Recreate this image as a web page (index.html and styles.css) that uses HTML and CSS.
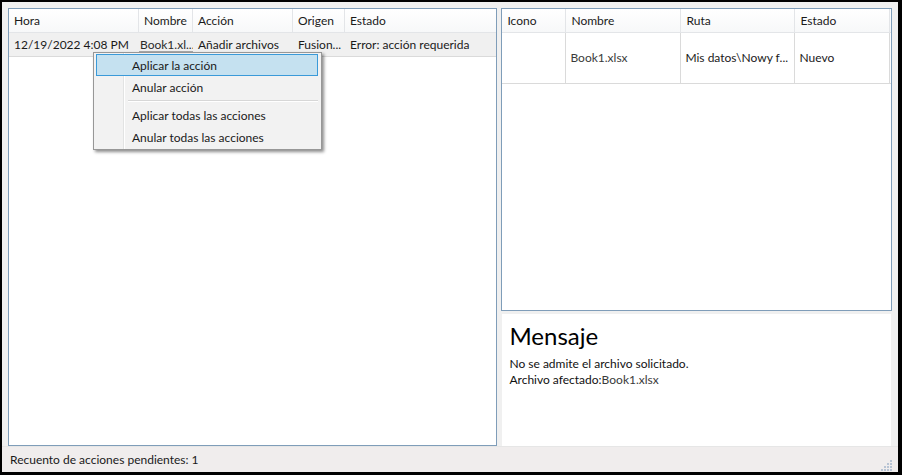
FILE: index.html
```html
<!DOCTYPE html>
<html lang="es">
<head>
<meta charset="utf-8">
<link rel="stylesheet" href="styles.css">
</head>
<body>
<div class="window">
  <div class="main">
    <div class="panel left">
      <div class="hdr lcols">
        <div class="hc">Hora</div>
        <div class="hc">Nombre</div>
        <div class="hc">Acción</div>
        <div class="hc">Origen</div>
        <div class="hc last">Estado</div>
      </div>
      <div class="row lcols sel">
        <div class="c">12/19/2022 4:08 PM</div>
        <div class="c focus">Book1.xl...</div>
        <div class="c">Añadir archivos</div>
        <div class="c">Fusion...</div>
        <div class="c">Error: acción requerida</div>
      </div>
    </div>
    <div class="rightcol">
      <div class="panel list">
        <div class="hdr rcols">
          <div class="hc">Icono</div>
          <div class="hc">Nombre</div>
          <div class="hc">Ruta</div>
          <div class="hc">Estado</div>
        </div>
        <div class="rrow rcols">
          <div class="rc"></div>
          <div class="rc soft">Book1.xlsx</div>
          <div class="rc">Mis datos\Nowy f...</div>
          <div class="rc">Nuevo</div>
        </div>
      </div>
      <div class="msg">
        <div class="msg-title">Mensaje</div>
        <div class="msg-line">No se admite el archivo solicitado.</div>
        <div class="msg-line">Archivo afectado:<span class="soft">Book1.xlsx</span></div>
      </div>
    </div>
  </div>
  <div class="status">
    <span>Recuento de acciones pendientes: 1</span>
    <svg class="grip" width="12" height="12" viewBox="0 0 12 12">
      <g fill="#b8c4d4">
        <rect x="10" y="1" width="2" height="2"/>
        <rect x="7" y="4" width="2" height="2"/><rect x="10" y="4" width="2" height="2"/>
        <rect x="4" y="7" width="2" height="2"/><rect x="7" y="7" width="2" height="2"/><rect x="10" y="7" width="2" height="2"/>
        <rect x="1" y="10" width="2" height="2"/><rect x="4" y="10" width="2" height="2"/><rect x="7" y="10" width="2" height="2"/><rect x="10" y="10" width="2" height="2"/>
      </g>
    </svg>
  </div>
  <div class="menu">
    <div class="mi active">Aplicar la acción</div>
    <div class="mi">Anular acción</div>
    <div class="msep"></div>
    <div class="mi">Aplicar todas las acciones</div>
    <div class="mi">Anular todas las acciones</div>
  </div>
</div>
</body>
</html>
```

FILE: styles.css
```css
* { box-sizing: border-box; }
html, body { margin: 0; padding: 0; background: #000; }
body {
  font-family: "Segoe UI", Lato, "Liberation Sans", sans-serif;
  font-size: 12px;
  color: #1a1a1a;
}
.window {
  position: relative;
  width: 902px;
  height: 475px;
  border-style: solid;
  border-color: #000;
  border-width: 2px 4px 3px 2px;
  background: #f0f0f0;
  display: flex;
  flex-direction: column;
}
.main {
  flex: 1;
  display: flex;
  gap: 4px;
  padding: 6px 6px 0 6px;
}
.panel {
  background: #fff;
  border: 1px solid #7f9db9;
}
.left { width: 490px; }
.rightcol {
  width: 391px;
  display: flex;
  flex-direction: column;
  gap: 3px;
}
.list { height: 303px; }
.hdr {
  height: 24px;
  background: linear-gradient(#ffffff, #f7f8f9);
  border-bottom: 1px solid #e3e5e8;
}
.lcols { display: grid; grid-template-columns: 130px 54px 100px 52px 1fr; }
.rcols { display: grid; grid-template-columns: 64px 115px 114px 95px; }
.hc {
  display: flex;
  align-items: center;
  padding-left: 5px;
  border-right: 1px solid #e3e5e8;
  white-space: nowrap;
  overflow: hidden;
}
.hc.last { border-right: none; }
.row {
  height: 24px;
  background: #f0f0f0;
  border-bottom: 1px solid #dadada;
}
.c {
  display: flex;
  align-items: center;
  padding-left: 5px;
  padding-bottom: 1px;
  white-space: nowrap;
  overflow: hidden;
}
.c.focus {
  padding-left: 1px;
  position: relative;
  color: #2a2a2a;
}
.c.focus::after {
  content: "";
  position: absolute;
  left: 0; right: 0; bottom: 4px;
  border-bottom: 1px solid #a8a8a8;
}
.rrow {
  height: 51px;
  border-bottom: 1px solid #dadada;
}
.rc {
  display: flex;
  align-items: center;
  padding-left: 4px;
  padding-bottom: 2px;
  border-right: 1px solid #dadada;
  white-space: nowrap;
  overflow: hidden;
}
.soft { color: #3a3a3a; }
.msg {
  flex: 1;
  background: #fff;
  margin: 0 1px;
  padding: 7px 7px;
}
.msg-title {
  font-size: 24px;
  line-height: 30px;
  margin-bottom: 5px;
  color: #000;
}
.msg-line { line-height: 16px; color: #111; }
.status {
  height: 26px;
  background: #f0eded;
  display: flex;
  align-items: center;
  justify-content: space-between;
  padding: 0 6px 0 8px;
  border-top: 1px solid #e6e6e6;
}
.grip { align-self: flex-end; margin-bottom: 1px; }
.menu {
  position: absolute;
  left: 91px;
  top: 50px;
  width: 229px;
  height: 98px;
  background: #f2f2f2;
  border: 1px solid #979797;
  box-shadow: 2px 2px 3px rgba(0,0,0,0.45);
  padding: 1px 3px 0 2px;
  background-image: linear-gradient(90deg, transparent 29px, #e2e3e3 29px, #e2e3e3 30px, #fff 30px, #fff 31px, transparent 31px);
}
.mi {
  height: 22px;
  display: flex;
  align-items: center;
  padding-left: 35px;
  border: 1px solid transparent;
}
.mi.active {
  background: #c5e1f0;
  border-color: #3a9ad9;
}
.msep {
  height: 6px;
  margin-left: 32px;
  position: relative;
}
.msep::after {
  content: "";
  position: absolute;
  left: 0; right: 0; top: 2px;
  border-top: 1px solid #d7d7d7;
  border-bottom: 1px solid #fff;
}
```
